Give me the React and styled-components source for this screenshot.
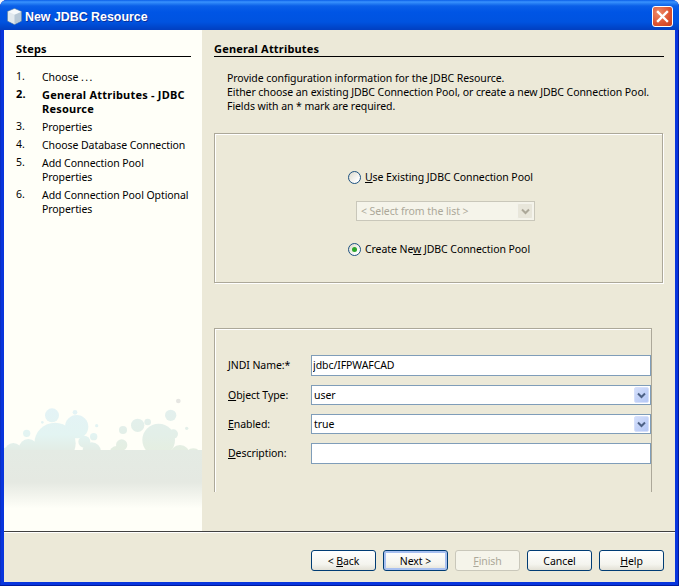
import React from "react"
import styled, { createGlobalStyle } from "styled-components"

const GlobalStyle = createGlobalStyle`
  html, body {
    margin: 0;
    padding: 0;
    background: #f4f6fb;
  }
  body {
    font-family: "Noto Sans", "DejaVu Sans", sans-serif;
    font-size: 10.5px;
    letter-spacing: -0.07px;
    line-height: 14px;
    color: #000;
  }
  * {
    box-sizing: border-box;
  }
`

const Window = styled.div`
  width: 679px;
  height: 586px;
  display: flex;
  flex-direction: column;
  padding: 0 4px 4px;
  background: #0835dd;
  border-radius: 7px 7px 0 0;
  box-shadow: inset -1px -1px 0 #001a9c, inset 1px 0 0 #0a2fc4;
  overflow: hidden;
`

const TitleBar = styled.div`
  height: 30px;
  margin: 0 -4px;
  padding: 3px 6px 0 7px;
  flex-shrink: 0;
  display: flex;
  align-items: center;
  gap: 3px;
  background: linear-gradient(
    180deg,
    #0a5ee8 0,
    #3a93ff 2px,
    #2b84f6 3px,
    #0a5fe8 6px,
    #0055e5 12px,
    #0053e0 22px,
    #0046cc 27px,
    #023fc0 30px
  );
`

const TitleText = styled.div`
  flex: 1;
  font-family: "Liberation Sans", sans-serif;
  font-weight: bold;
  font-size: 12.4px;
  letter-spacing: 0;
  color: #fff;
  text-shadow: 1px 1px 0 #0a2f9c;
`

const CloseButton = styled.div`
  width: 21px;
  height: 21px;
  border: 1px solid #fff;
  border-radius: 3px;
  background: radial-gradient(circle at 30% 30%, #ee8a68, #dd5230 60%, #c83e1c);
  display: flex;
  align-items: center;
  justify-content: center;
`

const Body = styled.div`
  height: 501px;
  flex-shrink: 0;
  display: flex;
  background: #ece9d8;
`

const Sidebar = styled.div`
  width: 198px;
  flex-shrink: 0;
  display: flex;
  flex-direction: column;
  padding-top: 12px;
  background: #fffff8;
`

const SideInner = styled.div`
  padding: 0 11px 0 12px;
`

const Heading = styled.div`
  font-weight: bold;
  font-size: 11px;
  letter-spacing: 0.18px;
  height: 15px;
  border-bottom: 1px solid #000;
`

const StepList = styled.ol`
  list-style: none;
  margin: 13px 0 0;
  padding: 0;
  display: flex;
  flex-direction: column;
  gap: 4px;
`

const Step = styled.li`
  display: grid;
  grid-template-columns: 26px 1fr;
  font-weight: ${props => (props.$active ? "bold" : "normal")};
  font-size: ${props => (props.$active ? "11px" : "inherit")};
  letter-spacing: ${props => (props.$active ? "0.22px" : "inherit")};
  white-space: nowrap;
`

const StepNum = styled.span`
  margin-top: -1px;
`

const Dots = styled.span`
  letter-spacing: 1.4px;
`

const Bubbles = styled.svg`
  display: block;
  margin-top: auto;
  margin-bottom: 16px;
`

const Content = styled.div`
  flex: 1;
  padding: 12px 11px 0 12px;
`

const Intro = styled.p`
  margin: 14px 0 0 13px;
  white-space: nowrap;
`

const ChoiceBox = styled.div`
  height: 150px;
  margin: 20px 1px 0 0;
  padding: 36px 0 0 133px;
  border: 1px solid #aca899;
  box-shadow: inset 1px 1px 0 #fff, 1px 1px 0 #fff;
`

const RadioRow = styled.label`
  display: flex;
  align-items: center;
  gap: 4px;
  height: 14px;
  margin-top: ${props => props.$top || 0}px;
`

const RadioCircle = styled.span`
  width: 13px;
  height: 13px;
  flex-shrink: 0;
  border: 1px solid #1c5180;
  border-radius: 50%;
  background: linear-gradient(135deg, #dcd9cc, #fff 80%);
  display: flex;
  align-items: center;
  justify-content: center;
  &::after {
    content: "";
    width: 5px;
    height: 5px;
    border-radius: 50%;
    background: ${props => (props.$checked ? "#2aa52a" : "transparent")};
  }
`

const DisabledSelect = styled.div`
  width: 179px;
  height: 20px;
  margin: 17px 0 0 8px;
  padding: 0 1px 0 4px;
  border: 1px solid #c9c7ba;
  background: #f5f4ea;
  color: #aca899;
  display: flex;
  align-items: center;
  justify-content: space-between;
`

const DisabledArrow = styled.span`
  width: 16px;
  height: 16px;
  border-radius: 2px;
  background: #e8e6da;
  border: 1px solid #f4f3ec;
  display: flex;
  align-items: center;
  justify-content: center;
`

const FormBox = styled.div`
  width: 438px;
  height: 164px;
  margin-top: 45px;
  padding: 26px 0 0 13px;
  border: 1px solid #aca899;
  border-bottom: 0;
  box-shadow: inset 1px 1px 0 #fff;
  display: grid;
  grid-template-columns: 83px 340px;
  grid-auto-rows: min-content;
  row-gap: 9px;
  align-items: center;
`

const FieldLabel = styled.span`
  margin-bottom: ${props => (props.$tall ? 2 : 0)}px;
`

const TextInput = styled.input`
  height: 21px;
  width: 340px;
  padding: 0 1px 2px;
  border: 1px solid #7f9db9;
  background: #fff;
  font: inherit;
  letter-spacing: inherit;
  color: #000;
  outline: none;
`

const Combo = styled.div`
  height: 20px;
  padding: 1px 1px 1px 2px;
  border: 1px solid #7f9db9;
  background: #fff;
  display: flex;
  align-items: center;
  justify-content: space-between;
`

const ComboArrow = styled.span`
  width: 15px;
  height: 16px;
  border: 1px solid #d6e0fb;
  border-radius: 2px;
  background: linear-gradient(135deg, #d4dffb, #b4c7f5);
  display: flex;
  align-items: center;
  justify-content: center;
`

const Footer = styled.div`
  flex: 1;
  display: flex;
  justify-content: flex-end;
  gap: 7px;
  padding: 18px 11px 0 0;
  border-top: 1px solid #404040;
  background: #ece9d8;
  box-shadow: inset 0 1px 0 #fff;
`

const Button = styled.button`
  width: 65px;
  height: 21px;
  padding: 0;
  border: 1px solid ${props => (props.disabled ? "#c9c7ba" : "#003c74")};
  border-radius: 3px;
  background: ${props =>
    props.disabled
      ? "#f5f4ea"
      : "linear-gradient(180deg, #fff 0%, #f4f4ee 70%, #e3e1d6 100%)"};
  box-shadow: ${props =>
    props.$default ? "inset 0 0 0 2px #a8c0f0" : "none"};
  color: ${props => (props.disabled ? "#aca899" : "#000")};
  font: inherit;
  letter-spacing: inherit;
`

const Chevron = ({ color }) => (
  <svg width="9" height="7" viewBox="0 0 9 7">
    <path d="M1 1.5 L4.5 5 L8 1.5" fill="none" stroke={color} strokeWidth="2" />
  </svg>
)

const CubeIcon = () => (
  <svg width="15" height="17" viewBox="0 0 15 17">
    <path d="M7.5 0.5 L14.5 3.5 V13 L7.5 16.5 L0.5 13 V3.5 Z" fill="#dfe8ee" stroke="#5f86ad" strokeWidth="0.8" strokeLinejoin="round" />
    <path d="M1 4 L7.5 6.8 V16 L1 12.7 Z" fill="#e2e9ee" />
    <path d="M7.5 6.8 L14 4 V12.7 L7.5 16 Z" fill="#b8c8d6" />
    <path d="M7.5 1 L14 3.7 L7.5 6.5 L1 3.7 Z" fill="#f6f9fb" />
  </svg>
)

const BubbleArt = () => (
  <Bubbles width="198" height="125" viewBox="12 0 594 375">
    <defs>
      <linearGradient id="tint" gradientUnits="userSpaceOnUse" x1="0" y1="50" x2="0" y2="190">
        <stop offset="0" stopColor="#e4f3f6" />
        <stop offset="0.6" stopColor="#e3f4f2" />
        <stop offset="1" stopColor="#e3ebe3" />
      </linearGradient>
      <linearGradient id="tintGreen" gradientUnits="userSpaceOnUse" x1="0" y1="50" x2="0" y2="190">
        <stop offset="0" stopColor="#e3f0ee" />
        <stop offset="0.6" stopColor="#e3efe8" />
        <stop offset="1" stopColor="#e5eee0" />
      </linearGradient>
      <linearGradient id="fade" gradientUnits="userSpaceOnUse" x1="0" y1="180" x2="0" y2="355">
        <stop offset="0" stopColor="#e4ebe4" />
        <stop offset="0.55" stopColor="#e5e9e2" />
        <stop offset="1" stopColor="#fffff8" />
      </linearGradient>
    </defs>
    <g fill="url(#tint)">
      <circle cx="156" cy="76" r="21" />
      <circle cx="225" cy="67" r="7" />
      <circle cx="127" cy="97" r="4" />
      <circle cx="80" cy="130" r="11" />
      <circle cx="165" cy="160" r="62" />
      <circle cx="230" cy="110" r="35" />
      <circle cx="290" cy="107" r="5" />
      <circle cx="281" cy="140" r="11" />
      <circle cx="253" cy="155" r="18" />
      <circle cx="275" cy="185" r="28" />
      <circle cx="85" cy="175" r="28" />
      <circle cx="40" cy="185" r="26" />
      <circle cx="22" cy="190" r="18" />
    </g>
    <g fill="url(#tintGreen)">
      <circle cx="512" cy="76" r="17" />
      <circle cx="413" cy="106" r="20" />
      <circle cx="443" cy="96" r="10" />
      <circle cx="369" cy="120" r="12" />
      <circle cx="476" cy="150" r="49" />
      <circle cx="520" cy="132" r="14" />
      <circle cx="560" cy="115" r="5" />
      <circle cx="365" cy="165" r="17" />
      <circle cx="350" cy="190" r="22" />
      <circle cx="540" cy="195" r="30" />
      <circle cx="580" cy="200" r="25" />
    </g>
    <circle cx="535" cy="33" r="7" fill="#e6e6e2" />
    <rect x="12" y="180" width="594" height="175" fill="url(#fade)" />
  </Bubbles>
)

export default function App() {
  return (
    <>
      <GlobalStyle />
      <Window>
        <TitleBar>
          <CubeIcon />
          <TitleText>New JDBC Resource</TitleText>
          <CloseButton>
            <svg width="13" height="13" viewBox="0 0 13 13">
              <path d="M2 2 L11 11 M11 2 L2 11" stroke="#fff" strokeWidth="2.4" strokeLinecap="square" />
            </svg>
          </CloseButton>
        </TitleBar>
        <Body>
          <Sidebar>
            <SideInner>
              <Heading>Steps</Heading>
              <StepList>
                <Step><StepNum>1.</StepNum><span>Choose <Dots>...</Dots></span></Step>
                <Step $active><StepNum>2.</StepNum><span>General Attributes - JDBC<br />Resource</span></Step>
                <Step><StepNum>3.</StepNum><span>Properties</span></Step>
                <Step><StepNum>4.</StepNum><span>Choose Database Connection</span></Step>
                <Step><StepNum>5.</StepNum><span>Add Connection Pool<br />Properties</span></Step>
                <Step><StepNum>6.</StepNum><span>Add Connection Pool Optional<br />Properties</span></Step>
              </StepList>
            </SideInner>
            <BubbleArt />
          </Sidebar>
          <Content>
            <Heading>General Attributes</Heading>
            <Intro>
              Provide configuration information for the JDBC Resource.<br />
              Either choose an existing JDBC Connection Pool, or create a new JDBC Connection Pool.<br />
              Fields with an * mark are required.
            </Intro>
            <ChoiceBox>
              <RadioRow>
                <RadioCircle />
                <span><u>U</u>se Existing JDBC Connection Pool</span>
              </RadioRow>
              <DisabledSelect>
                <span>&lt; Select from the list &gt;</span>
                <DisabledArrow><Chevron color="#aca899" /></DisabledArrow>
              </DisabledSelect>
              <RadioRow $top={21}>
                <RadioCircle $checked />
                <span>Create Ne<u>w</u> JDBC Connection Pool</span>
              </RadioRow>
            </ChoiceBox>
            <FormBox>
              <FieldLabel $tall><u>J</u>NDI Name:*</FieldLabel>
              <TextInput readOnly value="jdbc/IFPWAFCAD" />
              <FieldLabel><u>O</u>bject Type:</FieldLabel>
              <Combo>user<ComboArrow><Chevron color="#4d6185" /></ComboArrow></Combo>
              <FieldLabel><u>E</u>nabled:</FieldLabel>
              <Combo>true<ComboArrow><Chevron color="#4d6185" /></ComboArrow></Combo>
              <FieldLabel $tall><u>D</u>escription:</FieldLabel>
              <TextInput readOnly value="" />
            </FormBox>
          </Content>
        </Body>
        <Footer>
          <Button>&lt; <u>B</u>ack</Button>
          <Button $default>Next &gt;</Button>
          <Button disabled><u>F</u>inish</Button>
          <Button>Cancel</Button>
          <Button><u>H</u>elp</Button>
        </Footer>
      </Window>
    </>
  )
}
